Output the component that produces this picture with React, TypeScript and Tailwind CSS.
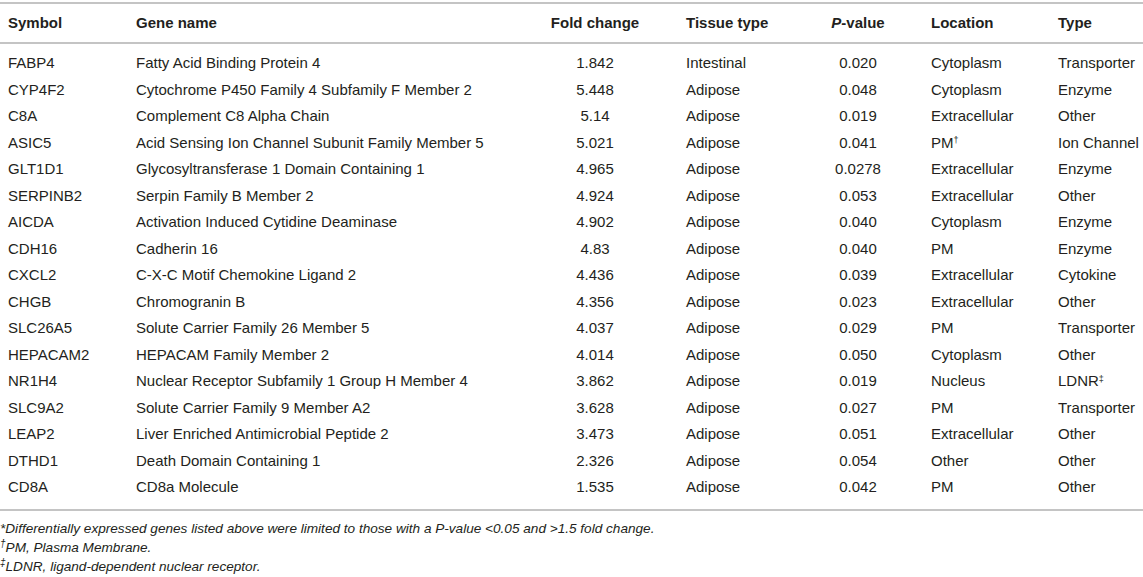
import React from 'react';

type Row = {
  symbol: string;
  name: string;
  fold: string;
  tissue: string;
  p: string;
  location: string;
  locMark?: string;
  type: string;
  typeMark?: string;
};

const ROWS: Row[] = [
  { symbol: 'FABP4', name: 'Fatty Acid Binding Protein 4', fold: '1.842', tissue: 'Intestinal', p: '0.020', location: 'Cytoplasm', type: 'Transporter' },
  { symbol: 'CYP4F2', name: 'Cytochrome P450 Family 4 Subfamily F Member 2', fold: '5.448', tissue: 'Adipose', p: '0.048', location: 'Cytoplasm', type: 'Enzyme' },
  { symbol: 'C8A', name: 'Complement C8 Alpha Chain', fold: '5.14', tissue: 'Adipose', p: '0.019', location: 'Extracellular', type: 'Other' },
  { symbol: 'ASIC5', name: 'Acid Sensing Ion Channel Subunit Family Member 5', fold: '5.021', tissue: 'Adipose', p: '0.041', location: 'PM', locMark: '†', type: 'Ion Channel' },
  { symbol: 'GLT1D1', name: 'Glycosyltransferase 1 Domain Containing 1', fold: '4.965', tissue: 'Adipose', p: '0.0278', location: 'Extracellular', type: 'Enzyme' },
  { symbol: 'SERPINB2', name: 'Serpin Family B Member 2', fold: '4.924', tissue: 'Adipose', p: '0.053', location: 'Extracellular', type: 'Other' },
  { symbol: 'AICDA', name: 'Activation Induced Cytidine Deaminase', fold: '4.902', tissue: 'Adipose', p: '0.040', location: 'Cytoplasm', type: 'Enzyme' },
  { symbol: 'CDH16', name: 'Cadherin 16', fold: '4.83', tissue: 'Adipose', p: '0.040', location: 'PM', type: 'Enzyme' },
  { symbol: 'CXCL2', name: 'C-X-C Motif Chemokine Ligand 2', fold: '4.436', tissue: 'Adipose', p: '0.039', location: 'Extracellular', type: 'Cytokine' },
  { symbol: 'CHGB', name: 'Chromogranin B', fold: '4.356', tissue: 'Adipose', p: '0.023', location: 'Extracellular', type: 'Other' },
  { symbol: 'SLC26A5', name: 'Solute Carrier Family 26 Member 5', fold: '4.037', tissue: 'Adipose', p: '0.029', location: 'PM', type: 'Transporter' },
  { symbol: 'HEPACAM2', name: 'HEPACAM Family Member 2', fold: '4.014', tissue: 'Adipose', p: '0.050', location: 'Cytoplasm', type: 'Other' },
  { symbol: 'NR1H4', name: 'Nuclear Receptor Subfamily 1 Group H Member 4', fold: '3.862', tissue: 'Adipose', p: '0.019', location: 'Nucleus', type: 'LDNR', typeMark: '‡' },
  { symbol: 'SLC9A2', name: 'Solute Carrier Family 9 Member A2', fold: '3.628', tissue: 'Adipose', p: '0.027', location: 'PM', type: 'Transporter' },
  { symbol: 'LEAP2', name: 'Liver Enriched Antimicrobial Peptide 2', fold: '3.473', tissue: 'Adipose', p: '0.051', location: 'Extracellular', type: 'Other' },
  { symbol: 'DTHD1', name: 'Death Domain Containing 1', fold: '2.326', tissue: 'Adipose', p: '0.054', location: 'Other', type: 'Other' },
  { symbol: 'CD8A', name: 'CD8a Molecule', fold: '1.535', tissue: 'Adipose', p: '0.042', location: 'PM', type: 'Other' },
];

// column template shared by header and body rows
const GRID = 'grid grid-cols-[136px_409px_100px_171px_84px_158px_1fr] items-center';

export default function App() {
  return (
    <div
      className="w-[1143px] h-[577px] bg-white text-[#231f20] pt-[2px]"
      style={{ fontFamily: '"Liberation Sans", Arial, sans-serif' }}
    >
      {/* Header */}
      <div className={`${GRID} h-[42px] border-y-2 border-[#c4c4c4] text-[15px] font-bold`}>
        <div className="pl-2">Symbol</div>
        <div>Gene name</div>
        <div className="text-center">Fold change</div>
        <div className="pl-[41px]">Tissue type</div>
        <div className="text-center">
          <span className="italic">P</span>-value
        </div>
        <div className="pl-[31px]">Location</div>
        <div>Type</div>
      </div>

      {/* Body */}
      <div className="pt-[6px] pb-[8px] border-b-2 border-[#c4c4c4] text-[15px]">
        {ROWS.map((r) => (
          <div key={r.symbol} className={`${GRID} h-[26.5px]`}>
            <div className="pl-2">{r.symbol}</div>
            <div>{r.name}</div>
            <div className="text-center">{r.fold}</div>
            <div className="pl-[41px]">{r.tissue}</div>
            <div className="text-center">{r.p}</div>
            <div className="pl-[31px]">
              {r.location}
              {r.locMark && <sup className="text-[9px]">{r.locMark}</sup>}
            </div>
            <div className="whitespace-nowrap">
              {r.type}
              {r.typeMark && <sup className="text-[9px]">{r.typeMark}</sup>}
            </div>
          </div>
        ))}
      </div>

      {/* Footnotes */}
      <div className="pt-[8px] text-[13.6px] italic leading-[19px]">
        <div>*Differentially expressed genes listed above were limited to those with a P-value &lt;0.05 and &gt;1.5 fold change.</div>
        <div>
          <sup className="text-[10px]">†</sup>PM, Plasma Membrane.
        </div>
        <div>
          <sup className="text-[10px]">‡</sup>LDNR, ligand-dependent nuclear receptor.
        </div>
      </div>
    </div>
  );
}
